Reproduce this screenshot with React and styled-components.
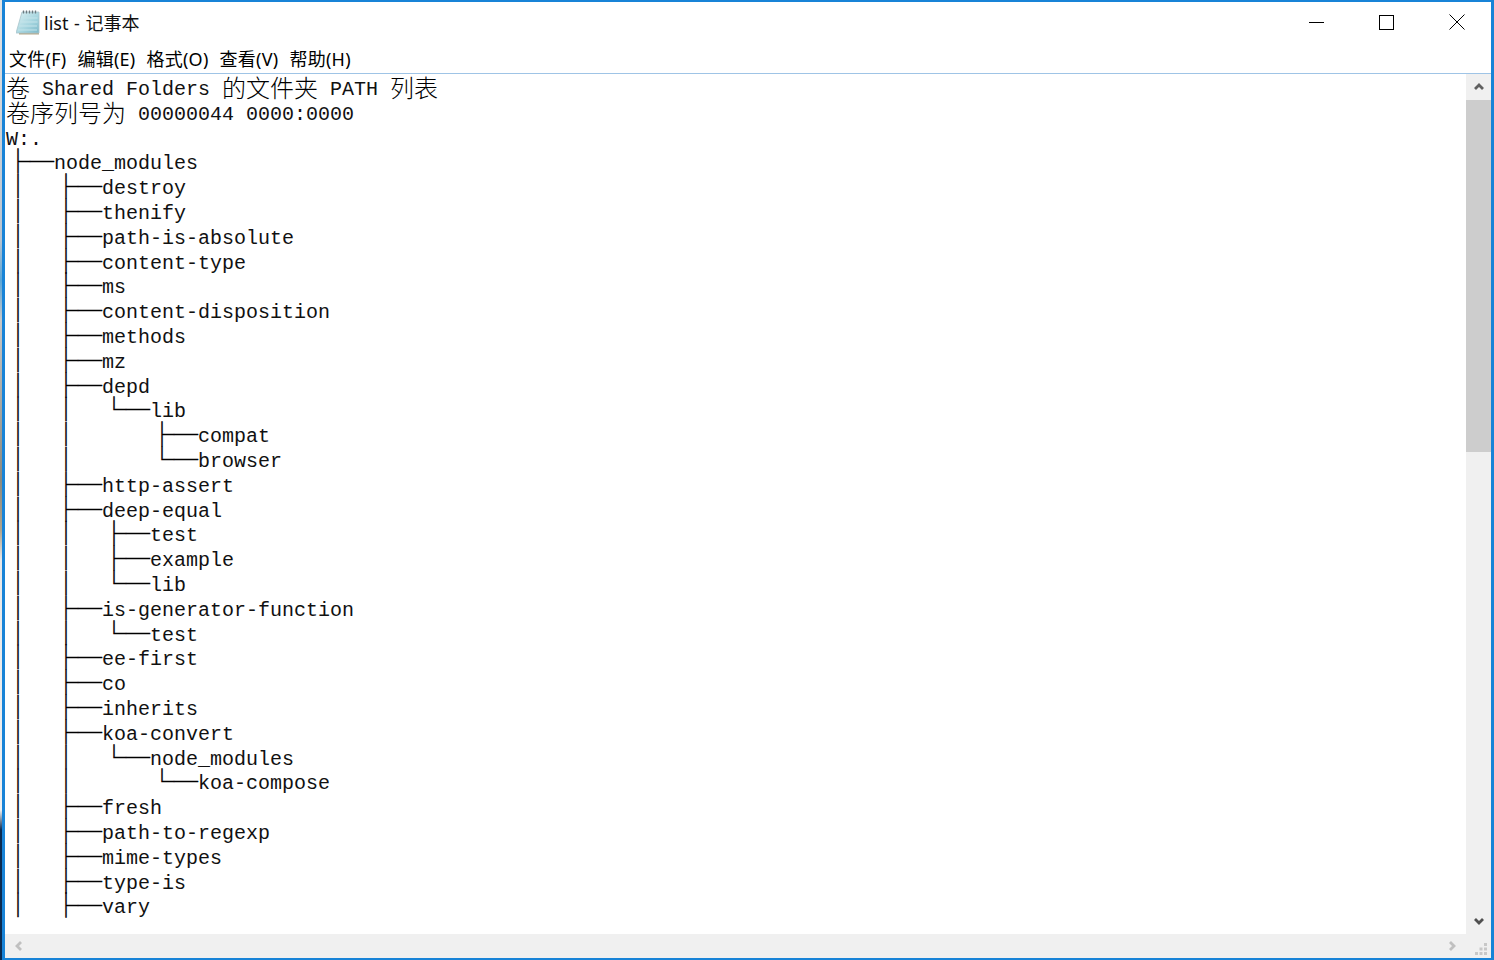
import React from 'react';
import styled, { createGlobalStyle } from 'styled-components';

const GlobalStyle = createGlobalStyle`
  html, body {
    margin: 0;
    padding: 0;
    background: #fff;
    overflow: hidden;
  }
`;

// sliver of the desktop that shows left of the window
const Desktop = styled.div`
  width: 1494px;
  height: 960px;
  box-sizing: border-box;
  padding-left: 2px;
  background: linear-gradient(
    to bottom,
    #e4e4e4 0,
    #b8c4d0 240px,
    #5aa6d8 280px,
    #c8c8c8 320px,
    #8a8a80 480px,
    #b0a48c 530px,
    #e8e8e8 560px,
    #f0f0f0 810px,
    #0a2a50 830px,
    #0a2a50 950px
  );
`;

const Window = styled.div`
  height: 100%;
  box-sizing: border-box;
  display: flex;
  flex-direction: column;
  background: #fff;
  border-style: solid;
  border-color: #1883d7;
  border-width: 2px 3px 2px 3px;
`;

const TitleBar = styled.div`
  height: 40px;
  display: flex;
  align-items: center;
  padding-left: 11px;
  flex: none;
`;

const TitleText = styled.span`
  margin-left: 4px;
  font: 18px "Noto Sans", "Noto Sans CJK SC", sans-serif;
  word-spacing: 1px;
  color: #111;
`;

const WindowControls = styled.div`
  margin-left: auto;
  display: flex;
  align-items: center;
  padding-right: 26px;
  gap: 55px;
`;

const MenuBar = styled.div`
  height: 31px;
  flex: none;
  display: flex;
  align-items: center;
  gap: 11px;
  padding-left: 4px;
  border-bottom: 1px solid #9fc4e6;
`;

const MenuItem = styled.span`
  font: 18px "Noto Sans", "Noto Sans CJK SC", sans-serif;
  letter-spacing: 0.25px;
  color: #000;
`;

const Body = styled.div`
  flex: 1;
  min-height: 0;
  display: flex;
`;

const Editor = styled.div`
  flex: 1;
  overflow: hidden;
  padding: 4px 0 0 1px;
  color: #111;
`;

const Line = styled.div`
  height: 24.8px;
  line-height: 24.8px;
  white-space: pre;
  font-family: "Liberation Mono", monospace;
  font-size: 20px;
`;

const Wide = styled.span`
  font-family: "Noto Sans CJK SC", sans-serif;
  font-size: 24px;
  line-height: 0;
  vertical-align: -2px;
  font-weight: 300;
  color: #000;
`;

const BoxChars = styled(Wide)`
  vertical-align: -1px;
  font-weight: 400;
  -webkit-text-stroke: 0.5px #000;
`;

const VScroll = styled.div`
  width: 25px;
  flex: none;
  display: flex;
  flex-direction: column;
  background: #f0f0f0;
`;

const ArrowCell = styled.div`
  height: 26px;
  flex: none;
  display: flex;
  align-items: center;
  justify-content: center;
`;

const Thumb = styled.div`
  height: 352px;
  flex: none;
  background: #cdcdcd;
`;

const Spacer = styled.div`
  flex: 1;
`;

const HScroll = styled.div`
  height: 24px;
  flex: none;
  display: flex;
  align-items: center;
  background: #f0f0f0;
`;

const HArrow = styled.div`
  width: ${(p) => p.$width}px;
  flex: none;
  display: flex;
  align-items: center;
  justify-content: center;
`;

const Grip = styled.div`
  width: 25px;
  height: 24px;
  flex: none;
`;

const lines = [
  '卷 Shared Folders 的文件夹 PATH 列表',
  '卷序列号为 00000044 0000:0000',
  'W:.',
  '├─node_modules',
  '│  ├─destroy',
  '│  ├─thenify',
  '│  ├─path-is-absolute',
  '│  ├─content-type',
  '│  ├─ms',
  '│  ├─content-disposition',
  '│  ├─methods',
  '│  ├─mz',
  '│  ├─depd',
  '│  │  └─lib',
  '│  │      ├─compat',
  '│  │      └─browser',
  '│  ├─http-assert',
  '│  ├─deep-equal',
  '│  │  ├─test',
  '│  │  ├─example',
  '│  │  └─lib',
  '│  ├─is-generator-function',
  '│  │  └─test',
  '│  ├─ee-first',
  '│  ├─co',
  '│  ├─inherits',
  '│  ├─koa-convert',
  '│  │  └─node_modules',
  '│  │      └─koa-compose',
  '│  ├─fresh',
  '│  ├─path-to-regexp',
  '│  ├─mime-types',
  '│  ├─type-is',
  '│  ├─vary',
];

const WIDE_RE = /([\u2500-\u257f]+|[\u4e00-\u9fff]+)/;

// wide glyphs are two columns of the 12px grid, so they get their own size
const renderLine = (text) =>
  text.split(WIDE_RE).map((part, i) => {
    if (i % 2 === 0) return part;
    return /[\u2500-\u257f]/.test(part) ? (
      <BoxChars key={i}>{part}</BoxChars>
    ) : (
      <Wide key={i}>{part}</Wide>
    );
  });

const NotepadIcon = () => (
  <svg width="24" height="26" viewBox="0 0 24 26">
    <defs>
      <linearGradient id="page" x1="0" y1="0" x2="1" y2="1">
        <stop offset="0" stopColor="#dff2f4" />
        <stop offset="0.6" stopColor="#a4d4de" />
        <stop offset="1" stopColor="#7cb8c8" />
      </linearGradient>
    </defs>
    <path d="M3 24h20v1.500H3z" fill="#b5a88a" />
    <path d="M6 3h17v21H0z" fill="url(#page)" stroke="#a8c4cc" strokeWidth="0.8" />
    <path d="M7.500 1.500v3M10.500 1.500v3M13.500 1.500v3M16.500 1.500v3M19.500 1.500v3" stroke="#6c7a80" strokeWidth="1.300" />
    <path d="M5.500 9h16M4.500 13h17M3 17h18M2 21h19" stroke="#c4e4ea" strokeWidth="1" />
  </svg>
);

const MinimizeIcon = () => (
  <svg width="15" height="15" viewBox="0 0 15 15">
    <path d="M0 7.500h15" stroke="#000" strokeWidth="1" />
  </svg>
);

const MaximizeIcon = () => (
  <svg width="15" height="15" viewBox="0 0 15 15">
    <rect x="0.500" y="0.500" width="14" height="14" fill="none" stroke="#000" strokeWidth="1" />
  </svg>
);

const CloseIcon = () => (
  <svg width="16" height="16" viewBox="0 0 16 16">
    <path d="M0.500 0.500l15 15M15.500 0.500l-15 15" stroke="#000" strokeWidth="1" />
  </svg>
);

const Chevron = ({ d, color }) => (
  <svg width="12" height="12" viewBox="0 0 12 12">
    <path d={d} fill="none" stroke={color} strokeWidth="2.800" />
  </svg>
);

const GripIcon = () => (
  <svg width="25" height="24" viewBox="0 0 25 24">
    <path d="M9 18h3v3H9zM13.500 18h3v3h-3zM18 18h3v3h-3zM13.500 13.500h3v3h-3zM18 13.500h3v3h-3zM18 9h3v3h-3z" fill="#c8c8c8" />
  </svg>
);

const menus = ['文件(F)', '编辑(E)', '格式(O)', '查看(V)', '帮助(H)'];

const App = () => (
  <>
    <GlobalStyle />
    <Desktop>
      <Window>
        <TitleBar>
          <NotepadIcon />
          <TitleText>list - 记事本</TitleText>
          <WindowControls>
            <MinimizeIcon />
            <MaximizeIcon />
            <CloseIcon />
          </WindowControls>
        </TitleBar>
        <MenuBar>
          {menus.map((m) => (
            <MenuItem key={m}>{m}</MenuItem>
          ))}
        </MenuBar>
        <Body>
          <Editor>
            {lines.map((l, i) => (
              <Line key={i}>{renderLine(l)}</Line>
            ))}
          </Editor>
          <VScroll>
            <ArrowCell>
              <Chevron d="M2 8l4-4 4 4" color="#606060" />
            </ArrowCell>
            <Thumb />
            <Spacer />
            <ArrowCell>
              <Chevron d="M2 4l4 4 4-4" color="#505050" />
            </ArrowCell>
          </VScroll>
        </Body>
        <HScroll>
          <HArrow $width={28}>
            <Chevron d="M8 2L4 6l4 4" color="#c0c0c0" />
          </HArrow>
          <Spacer />
          <HArrow $width={29}>
            <Chevron d="M4 2l4 4-4 4" color="#c0c0c0" />
          </HArrow>
          <Grip>
            <GripIcon />
          </Grip>
        </HScroll>
      </Window>
    </Desktop>
  </>
);

export default App;
